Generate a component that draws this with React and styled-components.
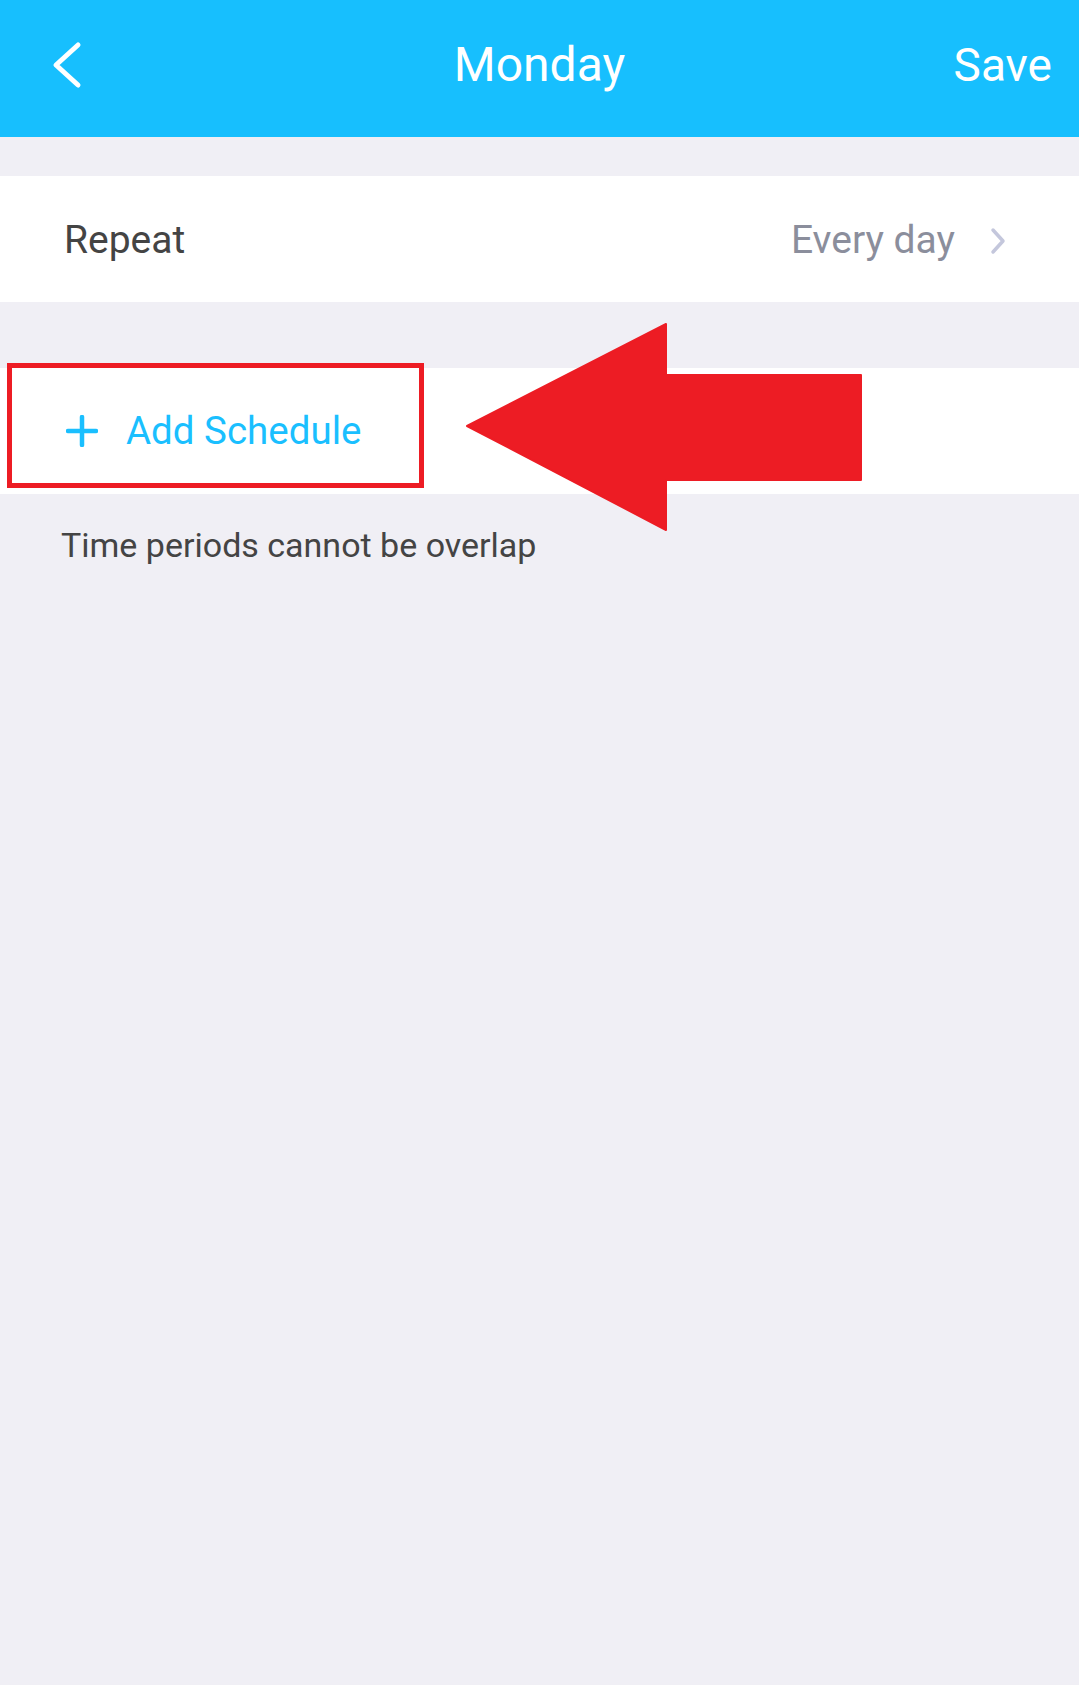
import React from "react";
import styled, {createGlobalStyle} from "styled-components";

const GlobalStyle = createGlobalStyle`
  html, body {
    margin: 0;
    padding: 0;
    background: #f0eff5;
    font-family: Roboto, "Noto Sans", "Liberation Sans", sans-serif;
  }
`

export default function App() {
    return <Page>
        <GlobalStyle/>
        <Header>
            <BackButton aria-label="back">
                <svg width="30" height="48" viewBox="0 0 30 48">
                    <polyline points="26,4 4,24 26,44" fill="none" stroke="#fff" strokeWidth="5"
                              strokeLinecap="round" strokeLinejoin="round"/>
                </svg>
            </BackButton>
            <Title>Monday</Title>
            <SaveButton>Save</SaveButton>
        </Header>

        <Row top="39px">
            <Label>Repeat</Label>
            <Value>
                Every day
                <svg width="18" height="28" viewBox="0 0 18 28">
                    <polyline points="4,3 14,14 4,25" fill="none" stroke="#c4c7dc" strokeWidth="3.5"
                              strokeLinecap="round" strokeLinejoin="round"/>
                </svg>
            </Value>
        </Row>

        <Row top="66px">
            <AddButton>
                <svg width="32" height="32" viewBox="0 0 32 32">
                    <path d="M16 2 V30 M2 16 H30" stroke="#1abfff" strokeWidth="4.5" strokeLinecap="round"/>
                </svg>
                Add Schedule
            </AddButton>
            <Highlight/>
            <Arrow width="402" height="212" viewBox="0 0 402 212">
                <polygon points="4,104 203,2 203,53 398,53 398,158 203,158 203,208"
                         fill="#ed1c24" stroke="#ed1c24" strokeWidth="2" strokeLinejoin="round"/>
            </Arrow>
        </Row>

        <Hint>Time periods cannot be overlap</Hint>
    </Page>
}

const Page = styled.div`
  min-height: 1685px;
  background: #f0eff5;
  display: flex;
  flex-direction: column;
`
const Header = styled.header`
  height: 137px;
  box-sizing: border-box;
  padding: 0 27px 7px 27px;
  background: #17bffe;
  display: grid;
  grid-template-columns: 1fr auto 1fr;
  align-items: center;
  color: #ffffff;
`
const BackButton = styled.div`
  display: flex;
  align-items: center;
  padding-left: 25px;
`
const Title = styled.h1`
  margin: 0;
  font-size: 48px;
  font-weight: 400;
  line-height: 1;
`
const SaveButton = styled.div`
  justify-self: end;
  font-size: 46px;
  line-height: 1;
`
const Row = styled.div`
  position: relative;
  margin-top: ${props => props.top || 0};
  height: 126px;
  background: #ffffff;
  display: flex;
  align-items: center;
  justify-content: space-between;
  padding: 0 72px 0 64px;
`
const Label = styled.span`
  font-size: 39px;
  color: #444444;
  line-height: 1;
  padding-top: 3px;
`
const Value = styled.span`
  display: flex;
  align-items: center;
  gap: 34px;
  font-size: 39px;
  line-height: 1;
  color: #8b8e9c;
  padding-top: 3px;
`
const AddButton = styled.div`
  display: flex;
  align-items: center;
  gap: 28px;
  margin-left: 2px;
  font-size: 38.5px;
  line-height: 1;
  color: #1abfff;
`
const Highlight = styled.div`
  position: absolute;
  left: 7px;
  top: -5px;
  width: 417px;
  height: 125px;
  box-sizing: border-box;
  border: 5px solid #ed1c24;
`
const Arrow = styled.svg`
  position: absolute;
  left: 463px;
  top: -46px;
`
const Hint = styled.p`
  margin: 0;
  padding: 34px 0 0 61px;
  font-size: 34px;
  line-height: 1;
  color: #444444;
`
